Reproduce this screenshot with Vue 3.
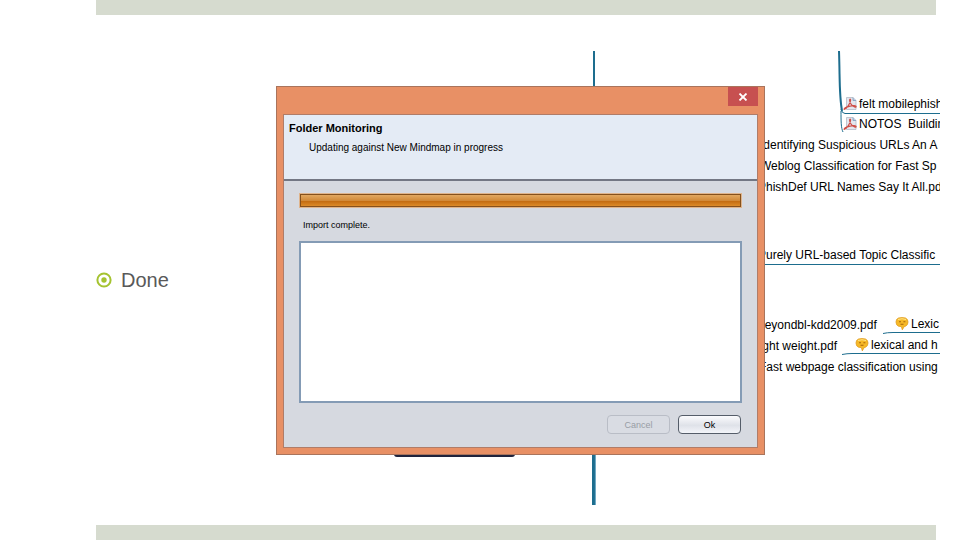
<template>
  <div class="slide">
    <header class="band"></header>

    <main class="content">
      <ul class="points">
        <li class="point">
          <svg class="bullet" viewBox="0 0 16 16" aria-hidden="true">
            <circle cx="8" cy="8" r="6.6" />
            <circle class="bullet-dot" cx="8" cy="8" r="2.7" />
          </svg>
          <span>Done</span>
        </li>
      </ul>

      <section class="mindmap">
        <!-- Branches of the map -->
        <svg class="branches" aria-hidden="true">
          <path class="thin" d="M318 0V36" />
          <path class="thick" d="M317.5 400V454" />
          <path class="light" d="M319.4 400V454" />
          <path class="thin" d="M563 0C564 28 563 44 566 60" />
          <path class="fine" d="M565 58Q566 62.500 569 62.500H664" />
          <path class="fine" d="M565 60C565 70 565 77 567 81" />
          <path class="fine" d="M480 213.500H664" />
          <path class="fine" d="M607 282.500Q611 281.500 617 281.500H664" />
          <path class="fine" d="M566 303.500Q571 302.500 576 302.500H664" />
        </svg>
        <div class="root-node"></div>

        <div
          v-for="node in nodes"
          :key="node.text"
          class="node"
          :style="{ left: node.x + 'px', top: node.y + 'px' }"
        >
          <svg v-if="node.icon === 'pdf'" class="icon" viewBox="0 0 14 14" aria-hidden="true">
            <path d="M3.500 .5h6.500l3 3v9H3.500z" fill="#e3e6ee" stroke="#b4bac8" stroke-width=".8" />
            <path d="M10 .5v3h3" fill="#bccbe0" stroke="#7f9cba" stroke-width=".8" />
            <path
              d="M1.200 12.400C3 12 5 9.500 6.500 6.500S7.800 1.800 6.900 2.200s0 4 2 5.900 4 2.600 4.200 1.500-3-1.200-6.100-.5-6 2.300-5.800 3.300z"
              fill="none"
              stroke="#cf4f48"
              stroke-width="1.200"
            />
          </svg>
          <svg v-else-if="node.icon === 'note'" class="icon" viewBox="0 0 14 14" aria-hidden="true">
            <path
              d="M3.500 1Q7 .2 10.500 1Q13 2 13 5T10.500 9.200L9.200 9.600L7.300 12.800L6.400 9.600L3.500 9.200Q1 8.200 1 5T3.500 1z"
              fill="#f6b927"
              stroke="#e09a1c"
              stroke-width=".8"
            />
            <path d="M3 2.500Q7 1 11 2.500" fill="none" stroke="#ffe58a" />
            <path d="M4 4.800h2M8.400 4.800h2M5.500 7.200h3" stroke="#a8660c" stroke-width="1.100" />
          </svg>
          <span>{{ node.text }}</span>
        </div>

        <div class="dialog" role="dialog" aria-labelledby="dialog-title">
          <div class="titlebar">
            <button class="close-button" type="button" aria-label="Close">
              <svg viewBox="0 0 10 8" aria-hidden="true">
                <path d="M1.500 .5L8.500 7.500M8.500 .5L1.500 7.500" />
              </svg>
            </button>
          </div>
          <div class="dialog-panel">
            <div class="dialog-header">
              <h2 id="dialog-title">Folder Monitoring</h2>
              <p>Updating against New Mindmap in progress</p>
            </div>
            <div class="dialog-body">
              <div class="progress" role="progressbar" aria-valuenow="100" aria-labelledby="status">
                <div class="progress-fill" :style="{ width: progress + '%' }"></div>
              </div>
              <label id="status" class="status" for="log">Import complete.</label>
              <textarea id="log" class="log" readonly></textarea>
              <div class="actions">
                <button class="button" type="button" disabled>Cancel</button>
                <button class="button" type="button">Ok</button>
              </div>
            </div>
          </div>
        </div>
      </section>
    </main>

    <footer class="band"></footer>
  </div>
</template>

<script setup>
import { ref } from 'vue';

const progress = ref(100);

const nodes = [
  { text: 'felt mobilephish', icon: 'pdf', x: 567, y: 45 },
  { text: 'NOTOS  Buildin', icon: 'pdf', x: 567, y: 65 },
  { text: 'Identifying Suspicious URLs An A', x: 484, y: 86 },
  { text: 'Weblog Classification for Fast Sp', x: 484, y: 107 },
  { text: 'PhishDef URL Names Say It All.pd', x: 482, y: 128 },
  { text: 'Purely URL-based Topic Classific', x: 482, y: 196 },
  { text: 'beyondbl-kdd2009.pdf', x: 482, y: 266 },
  { text: 'Lexic', icon: 'note', x: 619, y: 265 },
  { text: 'light weight.pdf', x: 481, y: 287 },
  { text: 'lexical and h', icon: 'note', x: 579, y: 286 },
  { text: 'Fast webpage classification using', x: 483, y: 308 }
];
</script>

<style>
body {
  margin: 0;
  background: #fff;
}
</style>

<style scoped>
.slide {
  display: flex;
  flex-direction: column;
  min-height: 100vh;
  font-family: "Liberation Sans", Arial, sans-serif;
  color: #000;
}

.band {
  height: 15px;
  margin: 0 24px 0 96px;
  background: #d6dbcf;
}

.content {
  flex: 1;
  display: flex;
  align-items: center;
  padding: 20px 20px 0 96px;
}

.points {
  width: 180px;
  margin: 0;
  padding: 0;
  list-style: none;
}

.point {
  display: flex;
  align-items: center;
  gap: 9px;
  font-size: 20px;
  line-height: 24px;
  color: #595959;
}

.bullet {
  width: 16px;
  height: 16px;
  fill: none;
  stroke: #a5c330;
  stroke-width: 2;
}

.bullet-dot {
  fill: #a5c330;
  stroke: none;
}

/* Mind map behind the dialog */
.mindmap {
  position: relative;
  flex: 1;
  align-self: flex-start;
  height: 454px;
  margin-top: 16px;
  overflow: hidden;
}

.branches {
  position: absolute;
  width: 100%;
  height: 100%;
  fill: none;
  stroke: #1d6d8e;
}

.thin {
  stroke-width: 2;
}

.thick {
  stroke-width: 3;
}

.light {
  stroke: #5f9fbd;
}

.root-node {
  position: absolute;
  left: 118px;
  top: 388px;
  width: 117px;
  height: 14px;
  border: 2px solid #20233c;
  border-radius: 3px;
}

.node {
  position: absolute;
  display: flex;
  align-items: center;
  gap: 2px;
  font-size: 12px;
  line-height: 16px;
  white-space: pre;
}

.icon {
  width: 14px;
  height: 14px;
}

/* Dialog window */
.dialog {
  position: absolute;
  left: 0;
  top: 35px;
  box-sizing: border-box;
  width: 489px;
  padding: 0 6px 6px;
  border: 1px solid #a9745c;
  background: #e89065;
}

.titlebar {
  display: flex;
  justify-content: flex-end;
  height: 27px;
}

.close-button {
  display: flex;
  align-items: center;
  justify-content: center;
  width: 30px;
  height: 19px;
  padding: 0;
  border: none;
  background: #c75050;
}

.close-button svg {
  width: 10px;
  height: 8px;
  stroke: #fff;
  stroke-width: 1.8;
}

.dialog-panel {
  border: 1px solid #b07c68;
  background: #d6d9e0;
}

.dialog-header {
  height: 64px;
  padding: 0 5px;
  border-bottom: 2px solid #737784;
  background: #e4ebf5;
}

.dialog-header h2 {
  margin: 0;
  padding-top: 5px;
  font-size: 11px;
  line-height: 16px;
}

.dialog-header p {
  margin: 0;
  padding: 4px 20px;
  font-size: 10px;
  line-height: 16px;
}

.dialog-body {
  display: flex;
  flex-direction: column;
  padding: 13px 15px;
}

.progress {
  height: 11px;
  margin: 0 1px;
  border: 1px solid #85501c;
  box-shadow: 0 0 0 1px #dfb48c;
}

.progress-fill {
  height: 100%;
  background: linear-gradient(#e2a861, #d18a3a 50%, #c26a10 55%, #dc8a28);
}

.status {
  padding: 11px 4px 9px;
  font-size: 9px;
  line-height: 14px;
}

.log {
  box-sizing: border-box;
  height: 162px;
  padding: 4px;
  border: 2px solid #849bb5;
  outline: none;
  background: #fff;
  resize: none;
}

.actions {
  display: flex;
  justify-content: flex-end;
  gap: 8px;
  padding: 12px 1px 0;
}

.button {
  width: 63px;
  height: 19px;
  padding: 0;
  border: 1px solid #555d69;
  border-radius: 4px;
  background: linear-gradient(#fbfbfd, #dfe2e9 55%, #f3f5f9);
  font-family: inherit;
  font-size: 9px;
  color: #000;
}

.button:disabled {
  border-color: #b9bdc6;
  background: #d9dce3;
  color: #989ca5;
}
</style>
